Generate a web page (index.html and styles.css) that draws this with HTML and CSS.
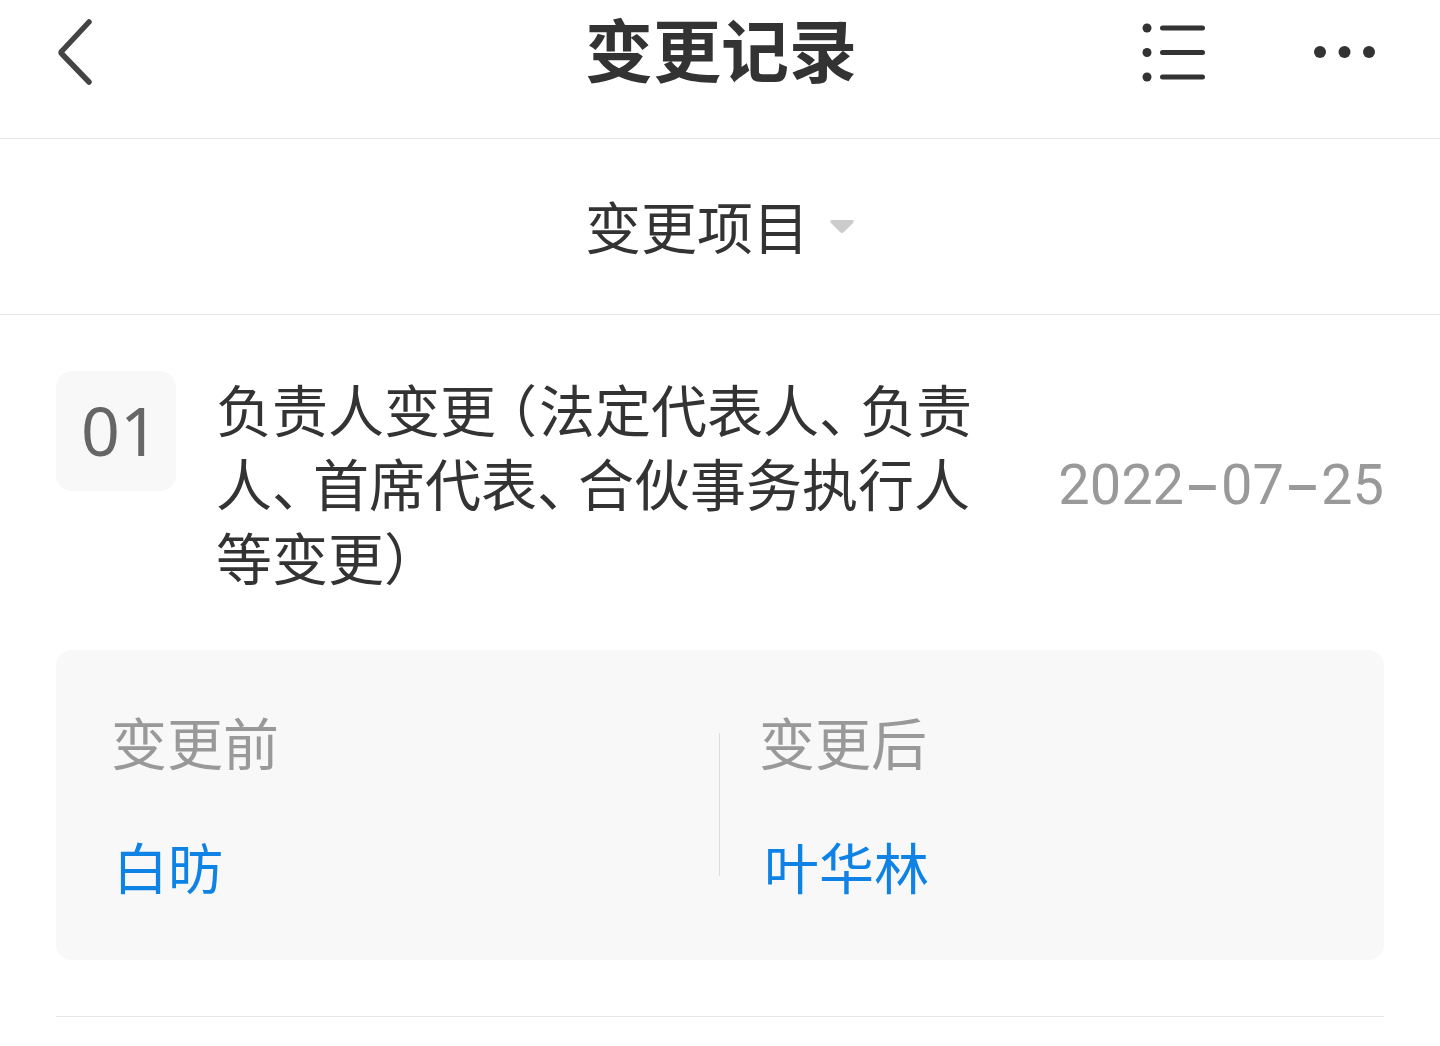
FILE: index.html
```html
<!DOCTYPE html>
<html lang="zh-CN">
<head>
  <title>变更记录</title>
  <link rel="stylesheet" href="styles.css">
</head>
<body>
  <div class="header">
    <svg class="back-icon" width="40" height="70" viewBox="0 0 40 70">
      <path d="M33 5 L6 34 Q4 35.500 6 37 L33 65" fill="none" stroke="#444" stroke-width="5.500" stroke-linecap="round" stroke-linejoin="round"/>
    </svg>
    <h1 class="title">变更记录</h1>
    <svg class="list-icon" width="66" height="60" viewBox="0 0 66 60">
      <circle cx="7" cy="6" r="4.500" fill="#333"/>
      <circle cx="7" cy="30.500" r="4.500" fill="#333"/>
      <circle cx="7" cy="55" r="4.500" fill="#333"/>
      <path d="M22.500 6 H62.500 M22.500 30.500 H62.500 M22.500 55 H62.500" stroke="#333" stroke-width="5" stroke-linecap="round"/>
    </svg>
    <svg class="more-icon" width="62" height="14" viewBox="0 0 62 14">
      <circle cx="6" cy="7" r="6" fill="#333"/>
      <circle cx="30.500" cy="7" r="6" fill="#333"/>
      <circle cx="55" cy="7" r="6" fill="#333"/>
    </svg>
  </div>

  <div class="filter-bar">
    <span class="filter-label">变更项目</span>
    <svg class="filter-arrow" width="26" height="16" viewBox="0 0 26 16">
      <path d="M3 1 H23 Q26 1 24 4 L15 13 Q13 15 11 13 L2 4 Q0 1 3 1 Z" fill="#ccc"/>
    </svg>
  </div>

  <div class="record">
    <div class="record-head">
      <div class="record-num">01</div>
      <div class="record-name">负责人变更<span class="paren">（</span>法定代表人<span class="dun">、</span>负责人<span class="dun">、</span>首席代表<span class="dun">、</span>合伙事务执行人等变更）</div>
      <div class="record-date">2022<span class="dash">-</span>07<span class="dash">-</span>25</div>
    </div>
    <div class="compare">
      <div class="compare-col">
        <div class="compare-label">变更前</div>
        <div class="compare-value">白昉</div>
      </div>
      <div class="compare-col after">
        <div class="compare-label">变更后</div>
        <div class="compare-value">叶华林</div>
      </div>
    </div>
  </div>
</body>
</html>
```

FILE: styles.css
```css
body {
  margin: 0;
  padding: 0;
  background-color: #fff;
  font-family: "Noto Sans CJK SC", "Noto Sans", sans-serif;
  color: #333;
}

.header {
  display: flex;
  align-items: center;
  box-sizing: border-box;
  height: 139px;
  padding: 0 64px 34px 56px;
  border-bottom: 1px solid #e5e5e5;
  position: relative;
}

.back-icon {
  margin-right: auto;
}

.title {
  position: absolute;
  left: 0;
  right: 0;
  top: 13px;
  margin: 0;
  padding-left: 2px;
  text-align: center;
  font-size: 68px;
  line-height: 70px;
  font-weight: 700;
}

.list-icon {
  margin-right: 108px;
}

.filter-bar {
  display: flex;
  align-items: center;
  justify-content: center;
  gap: 20px;
  height: 175px;
  border-bottom: 1px solid #e5e5e5;
}

.filter-label {
  font-size: 56px;
  line-height: 70px;
  margin-bottom: 4px;
}

.record {
  margin: 0 56px;
  padding: 56px 0;
  border-bottom: 1px solid #e5e5e5;
}

.record-head {
  display: flex;
  align-items: flex-start;
}

.record-num {
  flex: none;
  width: 120px;
  height: 120px;
  line-height: 118px;
  text-align: center;
  text-indent: 8px;
  font-size: 68px;
  color: #666;
  background-color: #f8f8f8;
  border-radius: 16px;
  font-family: "Noto Sans", sans-serif;
}

.record-name {
  flex: none;
  width: 770px;
  margin-left: 40px;
  font-size: 56px;
  line-height: 74px;
}

.paren {
  margin-left: -15px;
  margin-right: 2px;
}

.dun {
  letter-spacing: -15px;
}

.record-date {
  margin-left: auto;
  margin-top: 6px;
  align-self: center;
  font-family: Roboto, sans-serif;
  font-size: 56px;
  line-height: 74px;
  color: #999;
}

/* the dashes in the date are much longer than a plain hyphen */
.dash {
  display: inline-block;
  width: 37px;
  text-align: center;
  transform: scale(2, 1.2);
}

.compare {
  display: flex;
  margin-top: 57px;
  height: 310px;
  background-color: #f8f8f8;
  border-radius: 16px;
}

.compare-col {
  width: 50%;
  padding: 54px 0 0 55px;
  box-sizing: border-box;
}

.compare-col.after {
  padding-left: 39px;
  position: relative;
}

.compare-col.after::before {
  content: "";
  position: absolute;
  left: -1px;
  top: 83px;
  height: 143px;
  width: 1px;
  background-color: #ddd;
}

.compare-label {
  font-size: 56px;
  line-height: 74px;
  color: #999;
}

.compare-value {
  margin-top: 50px;
  margin-left: 2px;
  font-size: 55px;
  line-height: 74px;
  color: #0f82e6;
}

.after .compare-value {
  margin-left: 5px;
}
```
